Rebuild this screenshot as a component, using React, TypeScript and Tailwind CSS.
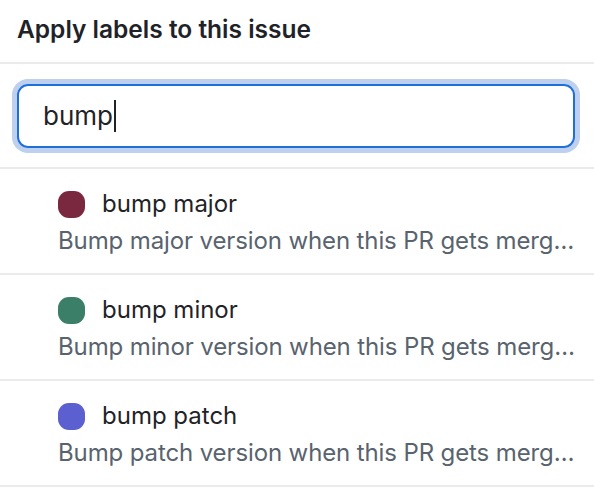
import React from "react";

type Label = {
  name: string;
  color: string;
  description: string;
};

const labels: Label[] = [
  {
    name: "bump major",
    color: "bg-[#7a2840]",
    description: "Bump major version when this PR gets merg…",
  },
  {
    name: "bump minor",
    color: "bg-[#3b7f68]",
    description: "Bump minor version when this PR gets merg…",
  },
  {
    name: "bump patch",
    color: "bg-[#5c5fd0]",
    description: "Bump patch version when this PR gets merg…",
  },
];

const LabelRow: React.FC<{ label: Label }> = ({ label }) => {
  return (
    <div className="border-t-2 border-[#ebebeb] pl-[58px] pr-[10px] pt-[19px] pb-[16px]">
      <div className="flex h-[32px] items-center gap-[17px]">
        <span className={`h-[27px] w-[27px] shrink-0 rounded-[11px] ${label.color}`}></span>
        <span className="text-[24px] leading-[32px] text-[#1f2328]">{label.name}</span>
      </div>
      <p className="mt-[5px] whitespace-nowrap text-[24px] leading-[32px] tracking-[-0.005em] text-[#59636e]">
        {label.description}
      </p>
    </div>
  );
};

export default function App() {
  return (
    <div className="h-[498px] w-[594px] overflow-hidden bg-white font-['Inter',sans-serif]">
      <div className="h-[62px] px-[17px] pt-[13px]">
        <h2 className="text-[24.5px] font-semibold leading-[32px] text-[#1f2328]">
          Apply labels to this issue
        </h2>
      </div>

      <div className="border-t-2 border-[#ebebeb] pt-[20px] pb-[19px] pl-[17px]">
        <div className="flex h-[64px] w-[558px] items-center rounded-[11px] border-2 border-[#1f6fd8] pl-[24px] ring-[5px] ring-[#bdd0f0]">
          <span className="text-[26px] leading-[32px] text-[#1f2328]">bump</span>
          <span className="ml-[1px] h-[32px] w-[2px] bg-[#1f2328]"></span>
        </div>
      </div>

      {labels.map((label) => (
        <LabelRow key={label.name} label={label} />
      ))}
      <div className="border-t-2 border-[#ebebeb]"></div>
    </div>
  );
}
